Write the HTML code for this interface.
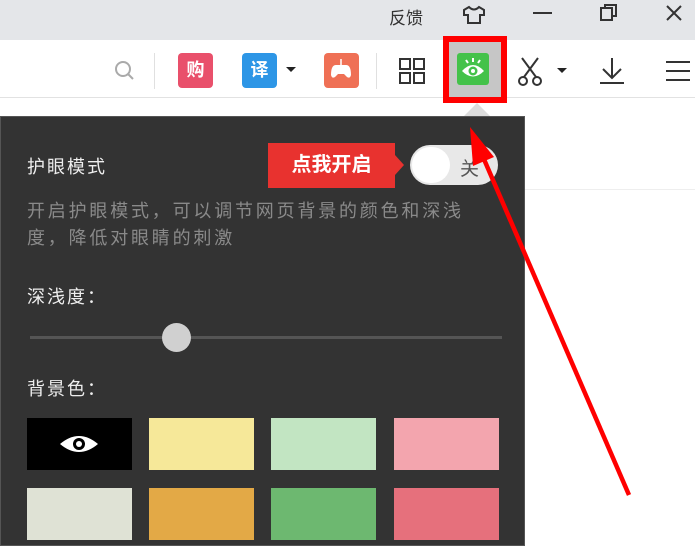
<!DOCTYPE html>
<html><head><meta charset="utf-8"><style>
*{margin:0;padding:0;box-sizing:border-box}
body{width:695px;height:539px;overflow:hidden;background:#fff;position:relative;font-family:"Liberation Sans","Noto Sans CJK SC",sans-serif}
.abs{position:absolute}
.top{left:0;top:0;width:695px;height:40px;background:#e4e6e9}
.tb{left:0;top:40px;width:695px;height:58px;background:#fff;border-bottom:1px solid #e2e2e2}
.ic{position:absolute;border-radius:4px;color:#fff;font-size:18px;font-weight:bold;text-align:center;line-height:35px;width:35px;height:35px;top:53px}
.panel{left:0;top:116px;width:525px;height:430px;background:#333;border:1px solid #555}
.t{color:#eee;font-size:18px;letter-spacing:2px}
.g{color:#8a8a8a;font-size:18px;line-height:27px;letter-spacing:2.8px}
.sw{position:absolute;width:105px;height:52px}
</style></head><body>
<div class="abs top"></div>
<div class="abs" style="left:389px;top:4px;font-size:17px;color:#333">反馈</div>
<svg class="abs" style="left:460px;top:4px" width="28" height="22" viewBox="0 0 28 22"><path d="M9 3 L4 6 L4 11 L8 11 L8 19 L20 19 L20 11 L24 11 L24 6 L19 3 Q14 8 9 3Z" fill="none" stroke="#333" stroke-width="2"/></svg>
<div class="abs" style="left:533px;top:12px;width:19px;height:2px;background:#333"></div>
<svg class="abs" style="left:598px;top:2px" width="22" height="22"><rect x="3" y="6" width="11" height="12" fill="none" stroke="#333" stroke-width="2"/><path d="M7 6 V3 H18 V14 H14" fill="none" stroke="#333" stroke-width="2"/></svg>
<svg class="abs" style="left:664px;top:3px" width="20" height="20"><path d="M3 3L17 17M17 3L3 17" stroke="#333" stroke-width="2"/></svg>
<div class="abs tb"></div>
<svg class="abs" style="left:112px;top:58px" width="26" height="26"><circle cx="11" cy="11" r="7" fill="none" stroke="#aaa" stroke-width="2"/><path d="M16 16L21 21" stroke="#aaa" stroke-width="2"/></svg>
<div class="abs" style="left:154px;top:53px;width:1px;height:36px;background:#e0e0e0"></div>
<div class="ic" style="left:178px;background:#e9506b">购</div>
<div class="ic" style="left:242px;background:#2d96e6">译</div>
<div class="abs" style="left:286px;top:67px;border:5px solid transparent;border-top:5px solid #222"></div>
<div class="ic" style="left:324px;background:#ef7055"><svg width="35" height="35"><path d="M7 22 Q7 12 12 12 H22 Q27 12 27 22 Q26 26 23 24 L20 21 H14 L11 24 Q8 26 7 22Z" fill="#fff"/><path d="M17 12 V6" stroke="#fff" stroke-width="1.5"/></svg></div>
<div class="abs" style="left:376px;top:53px;width:1px;height:36px;background:#e0e0e0"></div>
<svg class="abs" style="left:397px;top:56px" width="32" height="32"><g fill="none" stroke="#333" stroke-width="2"><rect x="3" y="3" width="10" height="10"/><rect x="17" y="3" width="10" height="10"/><rect x="3" y="17" width="10" height="10"/><rect x="17" y="17" width="10" height="10"/></g></svg>
<div class="abs" style="left:443px;top:36px;width:64px;height:67px;border:6px solid #f00;background:#c6c6c6"></div>
<div class="abs" style="left:457px;top:53px;width:32px;height:32px;background:#44c24a;border-radius:3px"><svg width="32" height="32"><path d="M5 18 Q16 6 27 18 Q16 29 5 18Z" fill="#fff"/><circle cx="16" cy="18" r="4.5" fill="#44c24a"/><circle cx="16" cy="18" r="2" fill="#fff"/><path d="M16 5V9M9 7L11 10M23 7L21 10" stroke="#fff" stroke-width="2"/></svg></div>
<svg class="abs" style="left:516px;top:55px" width="34" height="34"><g fill="none" stroke="#333" stroke-width="2"><path d="M6 3 L20 22 M22 3 L8 22"/><circle cx="7" cy="26" r="4"/><circle cx="21" cy="26" r="4"/></g></svg>
<div class="abs" style="left:557px;top:68px;border:5px solid transparent;border-top:5px solid #222"></div>
<svg class="abs" style="left:596px;top:55px" width="32" height="32"><g fill="none" stroke="#333" stroke-width="2"><path d="M16 3V23M7 14L16 23L25 14M4 28H28"/></g></svg>
<svg class="abs" style="left:664px;top:57px" width="28" height="28"><g stroke="#333" stroke-width="2"><path d="M2 5H26M2 14H26M2 23H26"/></g></svg>
<div class="abs" style="left:525px;top:189px;width:170px;height:1px;background:#eee"></div>
<div class="abs" style="left:464px;top:103px;border:13px solid transparent;border-bottom:13px solid #ddd;border-top:0"></div>
<div class="abs panel"></div>
<div class="abs t" style="left:27px;top:153px">护眼模式</div>
<div class="abs" style="left:268px;top:143px;width:127px;height:45px;background:#e8322f;color:#fff;font-size:20px;font-weight:bold;line-height:45px;text-align:center">点我开启</div>
<div class="abs" style="left:395px;top:155px;border:10px solid transparent;border-left:9px solid #e8322f"></div>
<div class="abs" style="left:410px;top:145px;width:88px;height:40px;border-radius:20px;background:#e8e8e8"></div>
<div class="abs" style="left:412px;top:147px;width:38px;height:36px;border-radius:18px;background:#fff"></div>
<div class="abs" style="left:460px;top:154px;font-size:19px;color:#555">关</div>
<div class="abs g" style="left:27px;top:198px;width:460px">开启护眼模式，可以调节网页背景的颜色和深浅度，降低对眼睛的刺激</div>
<div class="abs t" style="left:27px;top:283px">深浅度：</div>
<div class="abs" style="left:30px;top:336px;width:472px;height:3px;background:#555"></div>
<div class="abs" style="left:162px;top:323px;width:29px;height:29px;border-radius:50%;background:#d0d0d0"></div>
<div class="abs t" style="left:27px;top:375px">背景色：</div>
<div class="sw" style="left:27px;top:418px;background:#000"><svg width="105" height="52"><path d="M33 26 Q52 10 71 26 Q52 42 33 26Z" fill="#fff"/><circle cx="52" cy="26" r="6" fill="#000"/><circle cx="52" cy="26" r="3" fill="#fff"/></svg></div>
<div class="sw" style="left:149px;top:418px;background:#f6e899"></div>
<div class="sw" style="left:271px;top:418px;background:#c2e5c2"></div>
<div class="sw" style="left:394px;top:418px;background:#f3a5ae"></div>
<div class="sw" style="left:27px;top:488px;background:#dfe2d5"></div>
<div class="sw" style="left:149px;top:488px;background:#e3a946"></div>
<div class="sw" style="left:271px;top:488px;background:#6db870"></div>
<div class="sw" style="left:394px;top:488px;background:#e6707c"></div>
<svg class="abs" style="left:0;top:0" width="695" height="539"><path d="M629 495 L480 150" stroke="#f00" stroke-width="4.5"/><path d="M470 127 L494 157 L473 166Z" fill="#f00"/></svg>
</body></html>
